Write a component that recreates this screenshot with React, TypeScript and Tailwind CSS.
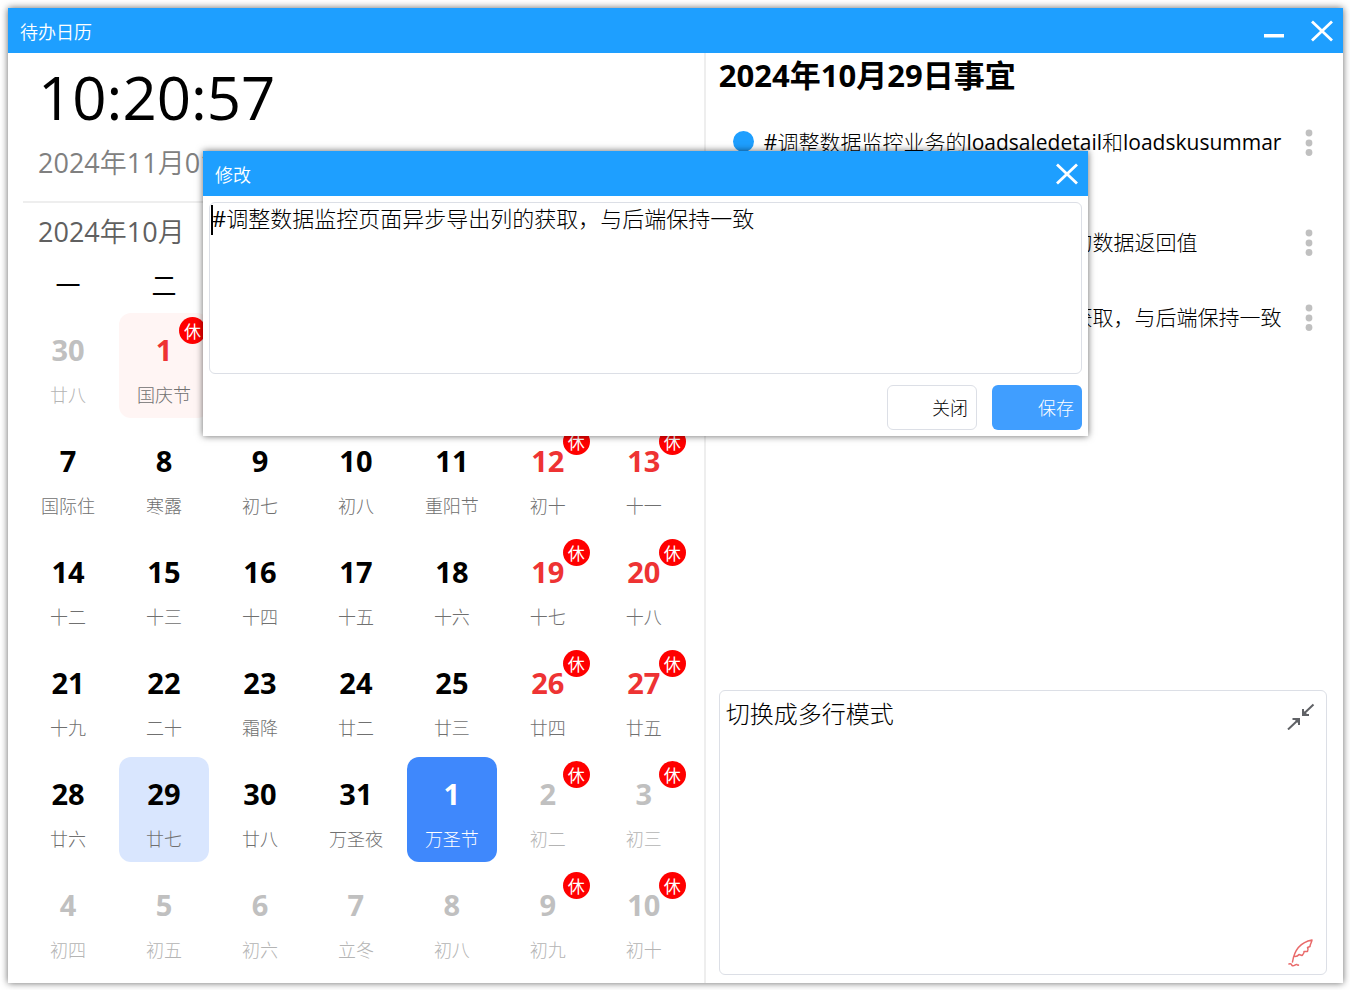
import { useState } from 'react';
import clsx from 'clsx';

interface Day{
  key: string,
  day: number,
  lunar: string,
  rest?: boolean,
  red?: boolean,
  holiday?: boolean,
  other?: boolean
}

const weekNames=["一","二","三","四","五","六","日"]

const lunarNames=[
  "廿八","国庆节","三十","初一","初二","初三","初四",
  "国际住","寒露","初七","初八","重阳节","初十","十一",
  "十二","十三","十四","十五","十六","十七","十八",
  "十九","二十","霜降","廿二","廿三","廿四","廿五",
  "廿六","廿七","廿八","万圣夜","万圣节","初二","初三",
  "初四","初五","初六","立冬","初八","初九","初十"
]

// 42 cells, starting on Monday 2024-09-30
const days:Day[]=lunarNames.map((lunar,i)=>{
  const date=new Date(2024,8,30+i)
  const other=date.getMonth()!==9
  const holiday=i>=1&&i<=6
  const rest=holiday||i%7>=5
  return {
    key:`${date.getMonth()+1}-${date.getDate()}`,
    day:date.getDate(),
    lunar,
    other,
    holiday,
    rest,
    red:rest&&!other
  }
})

const TODAY="11-1"

const todos=[
  "#调整数据监控业务的loadsaledetail和loadskusummary",
  "#调整数据监控业务的汇总与明细的数据返回值",
  "#调整数据监控页面异步导出列的获取，与后端保持一致"
]

function CloseIcon() {
  return (
    <svg width="22" height="22" viewBox="0 0 22 22" fill="none" stroke="#fff" strokeWidth="2.8">
      <path d="M1 1.5 21 20.5M21 1.5 1 20.5" />
    </svg>
  )
}

function MoreIcon() {
  return (
    <svg width="8" height="28" viewBox="0 0 8 28" fill="#c0c0c0">
      <circle cx="4" cy="4" r="3.4" />
      <circle cx="4" cy="14" r="3.4" />
      <circle cx="4" cy="23.5" r="3.4" />
    </svg>
  )
}

function ShrinkIcon() {
  return (
    <svg width="28" height="28" viewBox="0 0 28 28" fill="none" stroke="#606266" strokeWidth="2">
      <path d="M26.5 2.5 17 11.5M1 27.5 10.5 18.5" />
      <path d="M16 7v6h6M5.500 17H12v6" />
      <path d="M16 8v5h5zM7 17H12v5z" fill="#606266" stroke="none" />
    </svg>
  )
}

function QuillIcon() {
  return (
    <svg width="26" height="28" viewBox="0 0 26 28" fill="none" stroke="#e96a6a" strokeWidth="1.5" strokeLinecap="round" strokeLinejoin="round">
      <path d="M4.5 23C6 13 11 3.500 24 1C23.500 4 22 5.500 22 7.500L19.500 8.500C20.500 10 20 11.500 19.500 12.500L16 12.500C16.500 14.500 15 15.500 14 16.500L11 15.500C10 17 8.500 17.500 7 17.500" />
      <path d="M1 25C2.500 24.500 3.500 25 4 26.500C6.500 27.500 7 25 9 25.500C9.500 26.500 10.500 26 10.500 26" />
    </svg>
  )
}

interface DayCellProps{
  item: Day,
  selected: boolean,
  onSelect: (key:string)=>void
}

function DayCell({item, selected, onSelect}:DayCellProps) {
  const today=item.key===TODAY

  return (
    <button
      type="button"
      onClick={()=>onSelect(item.key)}
      className={clsx(
        "relative mx-[3px] flex h-[105px] flex-col items-center rounded-xl pt-[13px]",
        today ? "bg-[#3f88fc]" : selected ? "bg-[#d9e6fe]" : item.holiday && "bg-[#fff5f4]"
      )}
    >
      <span
        className={clsx(
          "text-[29px] leading-[48px] font-bold",
          today ? "text-white" : item.other ? "text-[#c0c0c0]" : item.red ? "text-[#ee3333]" : "text-black"
        )}
      >
        {item.day}
      </span>
      <span
        className={clsx(
          "text-lg leading-[42px]",
          today ? "text-white" : item.other ? "text-[#b4b4b4]" : "text-[#707070]"
        )}
      >
        {item.lunar}
      </span>
      {item.rest && !today && (
        <span className="absolute top-1 right-[3px] flex size-[27px] items-center justify-center rounded-full bg-[#ff0000] font-['Noto_Sans_CJK_SC',sans-serif] text-[17px] leading-none text-white">
          休
        </span>
      )}
    </button>
  )
}

export default function App() {
  const [selected, setSelected] = useState("10-29")
  const [draft, setDraft] = useState("切换成多行模式")
  const [editText, setEditText] = useState(todos[2])
  const [editing, setEditing] = useState(true)

  return (
    <div className="relative flex min-h-screen bg-white pt-2 pr-[7px] pb-[7px] pl-2 font-['Open_Sans','Noto_Sans_CJK_SC_Light','Noto_Sans_CJK_SC',sans-serif] text-black">
      <div className="flex flex-1 flex-col bg-white shadow-[0_0_7px_rgba(0,0,0,0.6)]">

        {/* Title bar */}
        <header className="flex h-[45px] items-center justify-between bg-[#1e9fff] pr-[10px] pl-3 text-white">
          <h1 className="font-['Noto_Sans_CJK_SC_DemiLight','Noto_Sans_CJK_SC',sans-serif] text-lg">待办日历</h1>
          <div className="flex items-center gap-[26px]">
            <button type="button" aria-label="最小化">
              <svg width="22" height="22" viewBox="0 0 22 22" fill="#fff">
                <path d="M1 14h20v3.500H1z" />
              </svg>
            </button>
            <button type="button" aria-label="关闭窗口">
              <CloseIcon />
            </button>
          </div>
        </header>

        <div className="grid flex-1 grid-cols-[23fr_21fr]">

          {/* Calendar */}
          <section className="border-r-2 border-[#eeeeee] px-3 pb-[10px]">
            <div className="pl-[18px]">
              <div className="text-[60px] leading-[88px]">10:20:57</div>
              <div className="pt-1 font-['Open_Sans','Noto_Sans_CJK_SC_DemiLight','Noto_Sans_CJK_SC',sans-serif] text-[27px] leading-9 text-[#808080]">2024年11月01日</div>
            </div>
            <div className="mx-[3px] mt-5 border-t-2 border-[#eeeeee]" />
            <h2 className="pl-[18px] font-['Open_Sans','Noto_Sans_CJK_SC_DemiLight','Noto_Sans_CJK_SC',sans-serif] text-[27px] leading-[58px] text-[#606060]">2024年10月</h2>
            <div className="grid grid-cols-7 pb-[6px] text-center font-['Noto_Sans_CJK_SC',sans-serif] text-[25px] leading-[46px]">
              {weekNames.map((name)=><div key={name}>{name}</div>)}
            </div>
            <div className="grid grid-cols-7 gap-y-[6px]">
              {days.map((item)=>(
                <DayCell key={item.key} item={item} selected={item.key===selected} onSelect={setSelected} />
              ))}
            </div>
          </section>

          {/* Todo list of the picked day */}
          <section className="flex flex-col pr-4 pb-2 pl-[13px]">
            <h2 className="mb-2 font-['Open_Sans','Noto_Sans_CJK_SC',sans-serif] text-[31px] leading-[44px] font-bold">2024年10月29日事宜</h2>
            <ul>
              {todos.map((todo)=>(
                <li key={todo} className="flex px-[14px] py-[25px] text-[21px] leading-[25px]">
                  <span className="mt-px mr-[10px] size-[21px] shrink-0 rounded-full bg-[#1e9fff]" />
                  <span className="mr-[18px] flex-1 break-all">{todo}</span>
                  <button type="button" aria-label="更多" className="flex h-[25px] items-center">
                    <MoreIcon />
                  </button>
                </li>
              ))}
            </ul>
            <div className="relative mt-auto flex">
              <textarea
                aria-label="新增事宜"
                value={draft}
                onChange={(e)=>setDraft(e.target.value)}
                className="h-[285px] w-full resize-none rounded-md border border-[#dcdfe6] px-[6px] py-[5px] text-2xl leading-9 outline-none"
              />
              <button type="button" aria-label="收起" className="absolute top-3 right-3">
                <ShrinkIcon />
              </button>
              <button type="button" aria-label="提交" className="absolute right-[13px] bottom-2">
                <QuillIcon />
              </button>
            </div>
          </section>
        </div>
      </div>

      {/* Edit dialog */}
      {editing && (
        <div role="dialog" aria-label="修改" className="absolute top-[151px] left-[203px] w-[885px] bg-white shadow-[0_0_7px_rgba(0,0,0,0.6)]">
          <div className="flex h-[45px] items-center justify-between bg-[#1e9fff] pr-[10px] pl-3 text-white">
            <h2 className="font-['Noto_Sans_CJK_SC_DemiLight','Noto_Sans_CJK_SC',sans-serif] text-lg">修改</h2>
            <button type="button" aria-label="关闭对话框" onClick={()=>setEditing(false)}>
              <CloseIcon />
            </button>
          </div>
          <div className="p-[6px]">
            <div className="relative flex">
              <textarea
                aria-label="事宜内容"
                value={editText}
                onChange={(e)=>setEditText(e.target.value)}
                className="h-[172px] w-full resize-none rounded-md border border-[#dcdfe6] px-[2px] text-[22px] leading-[30px] outline-none"
              />
              <span className="absolute top-[3px] left-[2px] h-[30px] w-[2px] bg-black" />
            </div>
            <div className="mt-[11px] flex justify-end gap-[15px] text-lg">
              <button type="button" onClick={()=>setEditing(false)} className="h-[45px] w-[90px] rounded-md border border-[#dcdfe6] pr-2 text-right">
                关闭
              </button>
              <button type="button" onClick={()=>setEditing(false)} className="h-[45px] w-[90px] rounded-md bg-[#409eff] pr-2 text-right text-white">
                保存
              </button>
            </div>
          </div>
        </div>
      )}
    </div>
  );
}
